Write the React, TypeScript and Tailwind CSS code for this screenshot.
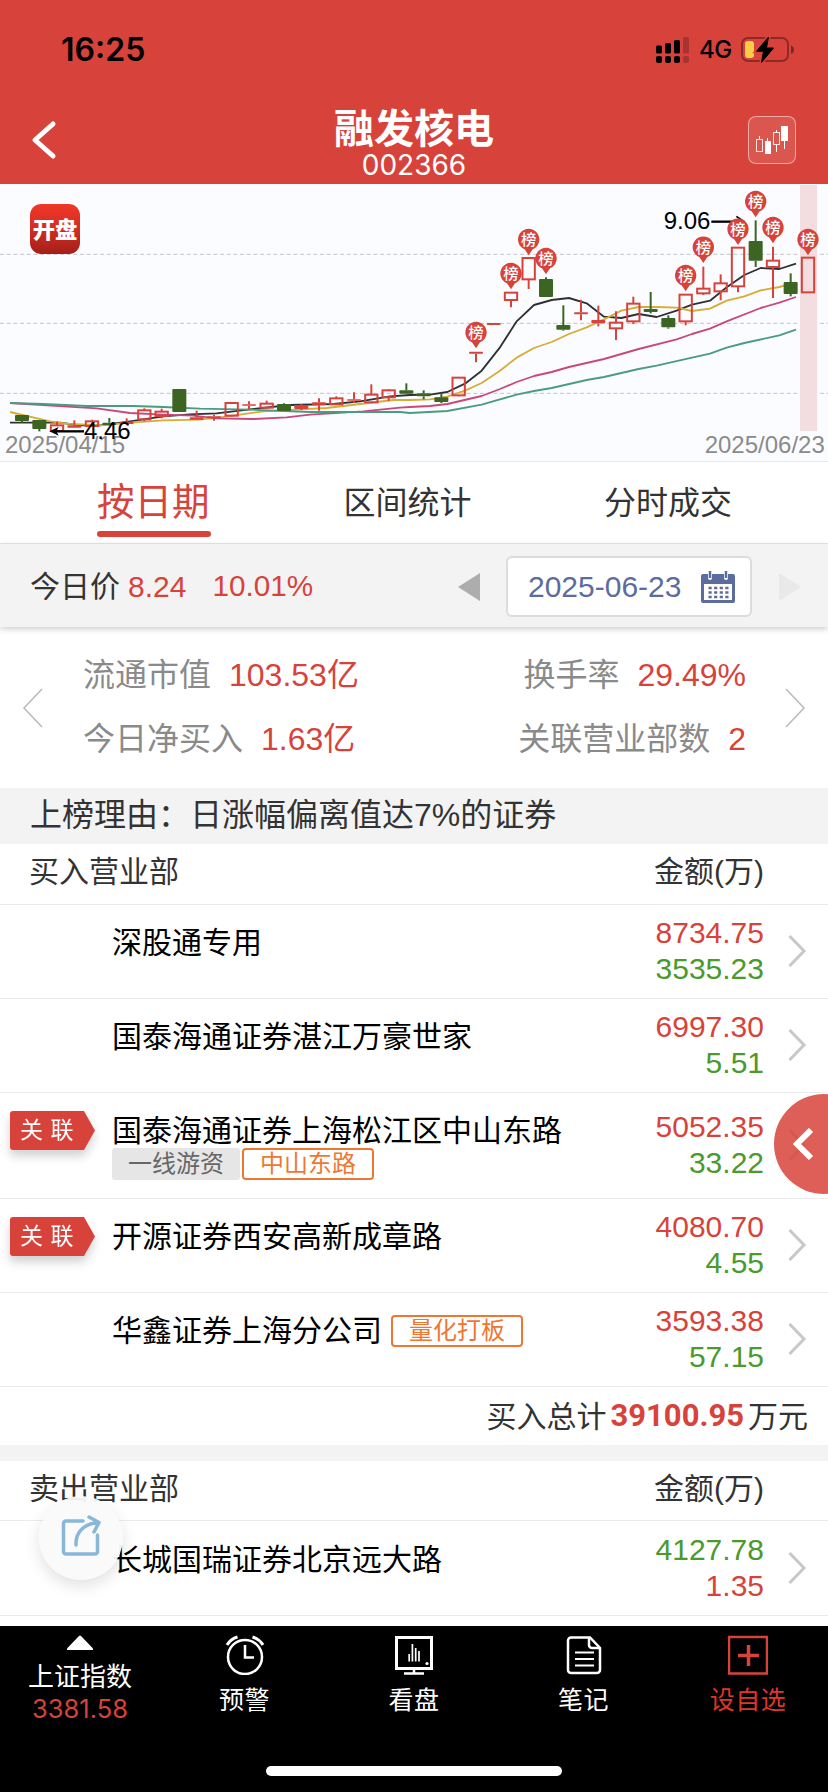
import type { ReactNode } from "react"

type Tag = { label: string; kind: "gray" | "orange" }

type Seat = {
  name: string
  buy: string
  sell: string
  linked?: boolean
  tags?: Tag[]
  inlineTag?: Tag
}

const buySeats: Seat[] = [
  { name: "深股通专用", buy: "8734.75", sell: "3535.23" },
  { name: "国泰海通证券湛江万豪世家", buy: "6997.30", sell: "5.51" },
  {
    name: "国泰海通证券上海松江区中山东路",
    buy: "5052.35",
    sell: "33.22",
    linked: true,
    tags: [
      { label: "一线游资", kind: "gray" },
      { label: "中山东路", kind: "orange" },
    ],
  },
  { name: "开源证券西安高新成章路", buy: "4080.70", sell: "4.55", linked: true },
  {
    name: "华鑫证券上海分公司",
    buy: "3593.38",
    sell: "57.15",
    inlineTag: { label: "量化打板", kind: "orange" },
  },
]

const RED = "#d7433b"
const GREEN = "#3c6422"

// kind: r = hollow rise, f = filled rise, g = fall
// [kind, high, body top, body bottom, low], chart units
const candles: [string, number, number, number, number][] = [
  ["g", 693, 693, 711, 716],
  ["g", 708, 708, 735, 742],
  ["r", 713, 724, 741, 741],
  ["f", 709, 724, 731, 731],
  ["r", 707, 712, 726, 728],
  ["g", 702, 716, 723, 725],
  ["f", 703, 714, 720, 722],
  ["r", 673, 679, 706, 712],
  ["r", 674, 683, 696, 703],
  ["g", 615, 615, 684, 684],
  ["f", 680, 700, 707, 707],
  ["f", 692, 697, 702, 710],
  ["r", 655, 657, 695, 697],
  ["f", 652, 661, 665, 676],
  ["r", 650, 659, 671, 674],
  ["g", 658, 660, 681, 681],
  ["f", 660, 663, 675, 678],
  ["f", 643, 655, 664, 680],
  ["r", 637, 643, 661, 663],
  ["f", 625, 646, 650, 657],
  ["r", 601, 632, 655, 657],
  ["r", 616, 619, 640, 651],
  ["g", 598, 619, 629, 631],
  ["g", 619, 628, 637, 646],
  ["g", 627, 640, 654, 657],
  ["r", 579, 581, 634, 637],
  ["f", 503, 503, 509, 535],
  ["f", 417, 417, 423, 423],
  ["r", 324, 326, 348, 370],
  ["r", 220, 222, 286, 315],
  ["g", 280, 285, 339, 339],
  ["g", 364, 423, 437, 440],
  ["f", 347, 385, 391, 409],
  ["f", 365, 408, 418, 427],
  ["r", 382, 416, 433, 468],
  ["r", 338, 359, 412, 420],
  ["g", 324, 375, 384, 388],
  ["g", 394, 402, 430, 434],
  ["r", 330, 332, 412, 424],
  ["r", 248, 314, 328, 333],
  ["r", 271, 298, 322, 349],
  ["r", 189, 191, 307, 325],
  ["g", 109, 171, 230, 249],
  ["r", 188, 230, 249, 342],
  ["g", 268, 294, 330, 337],
  ["r", 220, 221, 325, 326],
]

// candle index -> centre of the badge
const pins: [number, number][] = [
  [26, 446],
  [28, 269],
  [29, 167],
  [30, 224],
  [38, 275],
  [39, 190],
  [41, 136],
  [42, 53],
  [43, 131],
  [45, 167],
]

const averages = [
  {
    color: "#2e3034",
    points:
      "30,716 180,716 240,724 300,724 390,712 490,697 570,691 650,688 750,676 870,663 1000,660 1080,652 1170,637 1230,633 1290,632 1342,624 1395,599 1445,560 1500,490 1550,412 1602,363 1655,348 1707,342 1760,358 1812,398 1864,402 1916,390 1970,399 2030,380 2076,362 2130,350 2180,310 2233,273 2282,252 2338,255 2388,239",
  },
  {
    color: "#d7ad33",
    points:
      "30,684 150,712 200,719 300,724 400,715 490,709 600,707 660,700 790,682 900,676 980,672 1080,660 1180,648 1230,648 1290,646 1342,638 1395,620 1445,597 1500,560 1550,521 1602,492 1655,474 1707,450 1760,430 1812,406 1864,380 1916,369 1970,369 2030,371 2076,381 2130,374 2180,350 2233,337 2282,319 2338,309 2388,295",
  },
  {
    color: "#c9487c",
    points:
      "30,657 290,673 390,687 490,692 580,695 650,703 760,705 860,700 930,692 1090,682 1200,671 1230,669 1290,666 1342,660 1445,636 1500,615 1550,594 1602,576 1655,564 1707,549 1812,525 1916,495 2030,466 2076,450 2130,434 2180,412 2282,372 2338,356 2388,339",
  },
  {
    color: "#4b9c7e",
    points:
      "30,657 130,660 260,666 400,666 490,669 600,674 750,677 930,684 1200,684 1230,687 1342,681 1445,662 1550,632 1602,621 1655,612 1760,588 1812,579 1916,555 1970,545 2076,521 2130,509 2180,491 2233,477 2338,454 2388,437",
  },
]

const candleX = (i: number) => Math.round(66 + i * 52.4)

function KLineChart() {
  return (
    <svg viewBox="0 0 2484 831" className="block h-[277px] w-full bg-[#fafcff]">
      <defs>
        <linearGradient id="logo" x1="0" y1="0" x2="0" y2="1">
          <stop offset="0" stopColor="#ef3828" />
          <stop offset="0.5" stopColor="#d22d22" />
          <stop offset="1" stopColor="#a31f18" />
        </linearGradient>
      </defs>

      {[211, 418, 628].map((y) => (
        <line key={y} x1="0" x2="2484" y1={y} y2={y} stroke="#c3c5ca" strokeWidth="3" strokeDasharray="12 8" />
      ))}
      <rect x="2400" y="3" width="51" height="738" fill="#f3dde1" />

      {averages.map((a) => (
        <polyline key={a.color} points={a.points} fill="none" stroke={a.color} strokeWidth="5.5" strokeLinejoin="round" />
      ))}

      {candles.map(([kind, high, top, bottom, low], i) => {
        const x = candleX(i)
        const color = kind === "g" ? GREEN : RED
        return (
          <g key={i} stroke={color} strokeWidth="6">
            {high < top && <line x1={x} x2={x} y1={high} y2={top} />}
            {low > bottom && <line x1={x} x2={x} y1={bottom} y2={low} />}
            {kind === "r" ? (
              <rect x={x - 18.5} y={top} width="37" height={bottom - top} fill="none" />
            ) : (
              <rect x={x - 21} y={top} width="42" height={bottom - top} rx="3" fill={color} stroke="none" />
            )}
          </g>
        )
      })}

      {/* High and low marks */}
      <g stroke="#000" strokeWidth="7" fill="none">
        <path d="M2134 113H2215" />
        <path d="M2209 97L2232 112" strokeWidth="5" />
        <path d="M160 742H252" />
      </g>
      <path d="M148 742L176 729L169 742L176 755Z" />
      <g fontFamily="'Liberation Sans', Arial, sans-serif" fontSize="72">
        <text x="1991" y="135">9.06</text>
        <text x="15" y="807" fill="#8b8b8b">2025/04/15</text>
        <text x="2114" y="807" fill="#8b8b8b">2025/06/23</text>
        <text x="252" y="766">4.46</text>
      </g>

      {pins.map(([i, y]) => (
        <g key={i} transform={`translate(${candleX(i)} ${y})`}>
          <path d="M0 47L-12 29A32 32 0 1 1 12 29Z" fill={RED} />
          <text y="16" textAnchor="middle" fill="#fff" fontSize="46" fontWeight="500" fontFamily="'Noto Sans CJK SC', sans-serif">
            榜
          </text>
        </g>
      ))}

      <rect x="90" y="60" width="150" height="150" rx="34" fill="url(#logo)" />
      <text x="165" y="161" textAnchor="middle" fill="#fff" fontSize="67" fontWeight="900" fontFamily="'Noto Sans CJK SC', sans-serif">
        开盘
      </text>
    </svg>
  )
}

function StatusBar() {
  return (
    <div className="flex h-[96px] items-center justify-between pr-[33px] pl-[61px] pt-[4px] font-[Inter,sans-serif] text-black">
      <span className="text-[32px] font-semibold">16:25</span>
      <div className="flex items-center">
        <svg viewBox="0 0 34 27" className="h-[27px] w-[34px]">
          <rect x="0" y="8.500" width="6" height="8" rx="1.500" />
          <rect x="9" y="6" width="6" height="10.500" rx="1.500" />
          <rect x="18" y="3" width="6" height="13.500" rx="1.500" />
          <rect x="27" y="0" width="6" height="16.500" rx="1.500" opacity=".22" />
          <rect x="0" y="19" width="6" height="7" rx="2" />
          <rect x="9" y="19" width="6" height="7" rx="2" />
          <rect x="18" y="19" width="6" height="7" rx="2" />
          <rect x="27" y="19" width="6" height="7" rx="2" opacity=".22" />
        </svg>
        <span className="ml-[9px] w-[33px] text-[24px] leading-none font-medium tracking-[-0.5px]">4G</span>
        <svg viewBox="0 0 54 28" className="ml-[9px] h-[28px] w-[54px]">
          <rect x="1" y="2" width="46" height="23" rx="6" fill="none" stroke="#8c2a28" strokeWidth="2" />
          <rect x="4" y="5" width="9" height="17" rx="3" fill="#f7ce46" />
          <path d="M50 9.500C54 11 54 16.500 50 18Z" fill="#7d2624" />
          <path d="M27.500 1L15.500 15.200H22.500L20.500 26.500L32.500 12H25.500Z" stroke="#d7433b" strokeWidth="4" />
          <path d="M27.500 1L15.500 15.200H22.500L20.500 26.500L32.500 12H25.500Z" stroke="#000" strokeWidth="1" />
        </svg>
      </div>
    </div>
  )
}

function NavBar() {
  return (
    <div className="flex h-[88px] items-center justify-between pr-[32px] pl-[30px] text-white">
      <svg viewBox="0 0 50 40" className="h-[40px] w-[50px]" fill="none" stroke="#fff" strokeWidth="5" strokeLinecap="round" strokeLinejoin="round">
        <path d="M23 4L5 20L23 36" />
      </svg>
      <div className="flex flex-col items-center pt-[9px]">
        <h1 className="text-[40px] leading-[40px] font-bold">融发核电</h1>
        <p className="font-[Inter,sans-serif] text-[28px] leading-[32px] font-normal">002366</p>
      </div>
      <div className="flex h-[48px] w-[48px] items-center justify-center rounded-lg border border-white/50 bg-white/10">
        <svg viewBox="0 0 32 28" className="h-[28px] w-[32px]">
          <g fill="none" stroke="#fff" strokeOpacity=".85">
            <rect x=".5" y="13.500" width="6" height="12" />
            <rect x="17.500" y="6.500" width="6" height="12" />
          </g>
          <g fill="#fff">
            <rect x="3" y="10" width="1" height="3" />
            <rect x="9" y="15" width="6" height="13" />
            <rect x="11" y="12" width="1" height="3" />
            <rect x="20" y="4" width="1" height="3" />
            <rect x="20" y="19" width="1" height="7" />
            <rect x="25" y="0" width="7" height="15" />
            <rect x="28" y="15" width="1" height="8" />
          </g>
        </svg>
      </div>
    </div>
  )
}

function Tabs() {
  return (
    <div className="flex h-[82px] items-center justify-between border-b border-[#e6e6ea] pr-[96px] pl-[97px] text-[32px] leading-[40px] text-[#333]">
      <div className="flex flex-col pt-[10px]">
        <span className="text-[37.5px] leading-[46px] text-[#d7433b]">按日期</span>
        <span className="mt-[6px] h-[6px] w-[114px] rounded-full bg-[#d7433b]" />
      </div>
      <span>区间统计</span>
      <span>分时成交</span>
    </div>
  )
}

function PriceBar() {
  return (
    <div className="relative flex h-[83px] items-center bg-[#f3f3f3] pt-[2px] pl-[30px] text-[30px] shadow-[0_2px_6px_rgba(0,0,0,0.2)]">
      <span className="text-[#333]">今日价</span>
      <span className="ml-[8px] text-[#d7433b]">8.24</span>
      <span className="ml-[26px] text-[29.7px] text-[#d7433b]">10.01%</span>
      <svg viewBox="0 0 22 28" className="ml-auto h-[28px] w-[22px]" fill="#adadad">
        <path d="M22 0V28L0 14Z" />
      </svg>
      <div className="ml-[26px] flex h-[61px] w-[246px] items-center justify-between rounded-md border-2 border-[#dcdcdc] bg-white pr-[15px] pl-[20px] text-[#5c6c9e]">
        <span>2025-06-23</span>
        <svg viewBox="0 0 34 32" className="h-[32px] w-[34px]">
          <path
            fillRule="evenodd"
            fill="#5c6c9e"
            d="M2 3H7V7A2 2 0 0 0 11 7V3H23V7A2 2 0 0 0 27 7V3H32A2 2 0 0 1 34 5V30A2 2 0 0 1 32 32H2A2 2 0 0 1 0 30V5A2 2 0 0 1 2 3ZM3 13V29H31V13Z"
          />
          <path d="M9 0V7M25 0V7" stroke="#5c6c9e" strokeWidth="2.500" />
          <path d="M7.500 17H27.500M7.500 21.500H27.500M7.500 26H27.500" stroke="#5c6c9e" strokeWidth="2.500" strokeDasharray="3.200 2.400" />
        </svg>
      </div>
      <svg viewBox="0 0 22 28" className="mr-[27px] ml-[27px] h-[28px] w-[22px]" fill="#e9e9e9">
        <path d="M0 0V28L22 14Z" />
      </svg>
    </div>
  )
}

function Stat({ label, value }: { label: string; value: string }) {
  return (
    <div className="flex h-[64px] items-center gap-[18px]">
      <span className="text-[#8a8a8a]">{label}</span>
      <span className="text-[#d7433b]">{value}</span>
    </div>
  )
}

function Stats() {
  return (
    <div className="flex h-[161px] items-center justify-between px-[22px] text-[32px]">
      <svg viewBox="0 0 22 40" className="h-[40px] w-[22px]" fill="none" stroke="#b9b9b9" strokeWidth="1.500">
        <path d="M20 1L2 20L20 39" />
      </svg>
      <div className="flex flex-1 justify-between pr-[38px] pb-[2px] pl-[39px]">
        <div>
          <Stat label="流通市值" value="103.53亿" />
          <Stat label="今日净买入" value="1.63亿" />
        </div>
        <div className="flex flex-col items-end">
          <Stat label="换手率" value="29.49%" />
          <Stat label="关联营业部数" value="2" />
        </div>
      </div>
      <svg viewBox="0 0 22 40" className="h-[40px] w-[22px]" fill="none" stroke="#b9b9b9" strokeWidth="1.500">
        <path d="M2 1L20 20L2 39" />
      </svg>
    </div>
  )
}

function ListHeader({ title, className }: { title: string; className: string }) {
  return (
    <div
      className={`flex items-center justify-between border-b border-[#ebebeb] pr-[64px] pl-[29px] text-[30px] text-[#333] ${className}`}
    >
      <span>{title}</span>
      <span>金额(万)</span>
    </div>
  )
}

function TagBox({ tag }: { tag: Tag }) {
  if (tag.kind === "gray") {
    return (
      <span className="flex h-[32px] w-[128px] items-center justify-center rounded-[3px] bg-[#e6e6e6] text-[24px] text-[#666]">
        {tag.label}
      </span>
    )
  }
  return (
    <span className="flex h-[32px] w-[132px] items-center justify-center rounded-[4px] border-2 border-[#ee7733] text-[24px] text-[#ee7733]">
      {tag.label}
    </span>
  )
}

function LinkedBadge() {
  return (
    <div className="relative flex h-[39px] w-[85px] items-center drop-shadow-[0_6px_5px_rgba(0,0,0,0.18)]">
      <svg viewBox="0 0 85 39" className="absolute inset-0 h-full w-full" fill="#d7433b">
        <path d="M3 0H74L85 19.500L74 39H3A3 3 0 0 1 0 36V3A3 3 0 0 1 3 0Z" />
      </svg>
      <span className="relative pl-[10px] text-[23px] leading-none tracking-[7.500px] text-white">关联</span>
    </div>
  )
}

function SeatRow({ seat, selling }: { seat: Seat; selling?: boolean }) {
  const height = selling ? "h-[95px] pt-px" : seat.tags ? "h-[106px]" : "h-[94px]"

  return (
    <div className={`flex border-b border-[#ebebeb] pl-[10px] ${height}`}>
      <div className="w-[102px] shrink-0 pt-[18px]">{seat.linked && <LinkedBadge />}</div>
      <div className="flex-1 pt-[21px]">
        <div className="flex h-[34px] items-center gap-[9px]">
          <span className="text-[30px] leading-[34px] text-black">{seat.name}</span>
          {seat.inlineTag && <TagBox tag={seat.inlineTag} />}
        </div>
        {seat.tags && (
          <div className="flex gap-[2px]">
            {seat.tags.map((t) => (
              <TagBox key={t.label} tag={t} />
            ))}
          </div>
        )}
      </div>
      <div className="flex flex-col items-end justify-center pb-[2px] text-[30px] leading-[36px]">
        <span className={selling ? "text-[#4a9a2e]" : "text-[#d7433b]"}>{seat.buy}</span>
        <span className={selling ? "text-[#d7433b]" : "text-[#4a9a2e]"}>{seat.sell}</span>
      </div>
      <svg viewBox="0 0 20 32" className="mr-[21px] mb-[2px] ml-[23px] h-[32px] w-[20px] self-center" fill="none" stroke="#c8c8c8" strokeWidth="3">
        <path d="M2.500 1L17 16L2.500 31" />
      </svg>
    </div>
  )
}

function TabItem({ label, className, children }: { label: string; className: string; children: ReactNode }) {
  return (
    <div className={`flex flex-col items-center pt-[9px] ${className}`}>
      <svg viewBox="0 0 40 40" className="h-[40px] w-[40px]" fill="none" stroke="currentColor" strokeWidth="2.500">
        {children}
      </svg>
      <span className="mt-[7px] text-[25px] leading-[36px] tracking-[0.5px]">{label}</span>
    </div>
  )
}

function BottomBar() {
  return (
    <div className="flex h-[166px] flex-col justify-between bg-black pb-[16px]">
      <div className="flex text-white">
        <div className="flex w-[160px] flex-col items-center pt-[9px]">
          <svg viewBox="0 0 26 15" className="h-[15px] w-[26px]" fill="#fff">
            <path d="M12 1Q13 0 14 1L26 13.500V15H0V13.500Z" />
          </svg>
          <span className="mt-[9px] text-[26px] leading-[36px]">上证指数</span>
          <span className="font-[Inter,sans-serif] text-[25.5px] leading-[28px] text-[#d7433b]">3381.58</span>
        </div>
        <TabItem label="预警" className="w-[169px]">
          <circle cx="20" cy="22" r="17" />
          <path d="M20 10V22.500H29" />
          <path d="M2 10A18 18 0 0 1 12.500 2M38 10A18 18 0 0 0 27.500 2" strokeWidth="3" />
        </TabItem>
        <TabItem label="看盘" className="w-[170px]">
          <path d="M2.500 2.500H37.500V33.500H2.500Z" strokeWidth="3" />
          <path d="M20 34V38M10 38.500H30" />
          <path d="M15.200 19V26.500M18.400 9V26.500M21.700 13V26.500M25 16V26.500" strokeWidth="1.700" />
          <circle cx="33" cy="28.500" r="1.600" fill="currentColor" stroke="none" />
        </TabItem>
        <TabItem label="笔记" className="w-[169px]">
          <path d="M26 2.500H7A3 3 0 0 0 4 5.500V35A3 3 0 0 0 7 38H33A3 3 0 0 0 36 35V13Z" />
          <path d="M25 3V10A3 3 0 0 0 28 13H36" />
          <path d="M11 17.500H30M11 24H30M11 30.500H30" strokeWidth="2" />
        </TabItem>
        <TabItem label="设自选" className="w-[160px] text-[#e0352b]">
          <g stroke="#d7433b">
            <path d="M1 2H39V38.500H1Z" />
            <path d="M10 20.500H31M20.500 10V31" strokeWidth="3.500" />
          </g>
        </TabItem>
      </div>
      <div className="mx-auto h-[10px] w-[296px] rounded-full bg-white" />
    </div>
  )
}

export default function App() {
  return (
    <div className="relative flex h-[1792px] w-[828px] flex-col overflow-hidden bg-white font-['Liberation_Sans','Noto_Sans_CJK_SC',sans-serif]">
      <header className="bg-[#d7433b]">
        <StatusBar />
        <NavBar />
      </header>

      <KLineChart />

      <div className="border-t border-[#e8eaee]">
        <Tabs />
      </div>
      <PriceBar />
      <Stats />

      <div className="flex h-[56px] items-center bg-[#f3f3f3] pb-[2px] pl-[30px] text-[32px] text-[#333]">
        上榜理由：日涨幅偏离值达7%的证券
      </div>

      <ListHeader title="买入营业部" className="h-[61px] pb-[5px]" />
      {buySeats.map((s) => (
        <SeatRow key={s.name} seat={s} />
      ))}
      <div className="flex h-[58px] items-center justify-end pr-[20px] text-[30px] text-[#333]">
        买入总计
        <span className="mx-[4px] font-[Roboto,sans-serif] text-[31px] font-bold text-[#d7433b]">39100.95</span>
        万元
      </div>

      <div className="h-[16px] shrink-0 bg-[#f3f3f3]" />
      <ListHeader title="卖出营业部" className="h-[60px] pb-[4px]" />
      <SeatRow seat={{ name: "长城国瑞证券北京远大路", buy: "4127.78", sell: "1.35" }} selling />

      <div className="mt-auto">
        <BottomBar />
      </div>

      {/* Floating drawer handle */}
      <div className="absolute top-[1094px] left-[774px] flex h-[100px] w-[100px] items-center rounded-full bg-[#d7433b]/85 pl-[17px]">
        <svg viewBox="0 0 24 32" className="h-[32px] w-[24px]" fill="none" stroke="#fff" strokeWidth="6">
          <path d="M20 2L6 16L20 30" />
        </svg>
      </div>

      {/* Floating share button */}
      <div className="absolute top-[1496px] left-[39px] flex h-[84px] w-[84px] items-center justify-center rounded-full bg-[#fafafa]/95 pb-[4px] shadow-[0_6px_16px_rgba(0,0,0,0.12)]">
        <svg viewBox="0 0 40 42" className="h-[42px] w-[40px]" fill="none" stroke="#89b7d8" strokeWidth="3.500" strokeLinecap="round" strokeLinejoin="round">
          <path d="M22 6H5A2.500 2.500 0 0 0 2.500 8.500V36.500A2.500 2.500 0 0 0 5 39H34A2.500 2.500 0 0 0 36.500 36.500V20" />
          <path d="M15 30C14.500 19 21 9 37 7.500M28 2L38 7.500L33 17" />
        </svg>
      </div>
    </div>
  )
}
